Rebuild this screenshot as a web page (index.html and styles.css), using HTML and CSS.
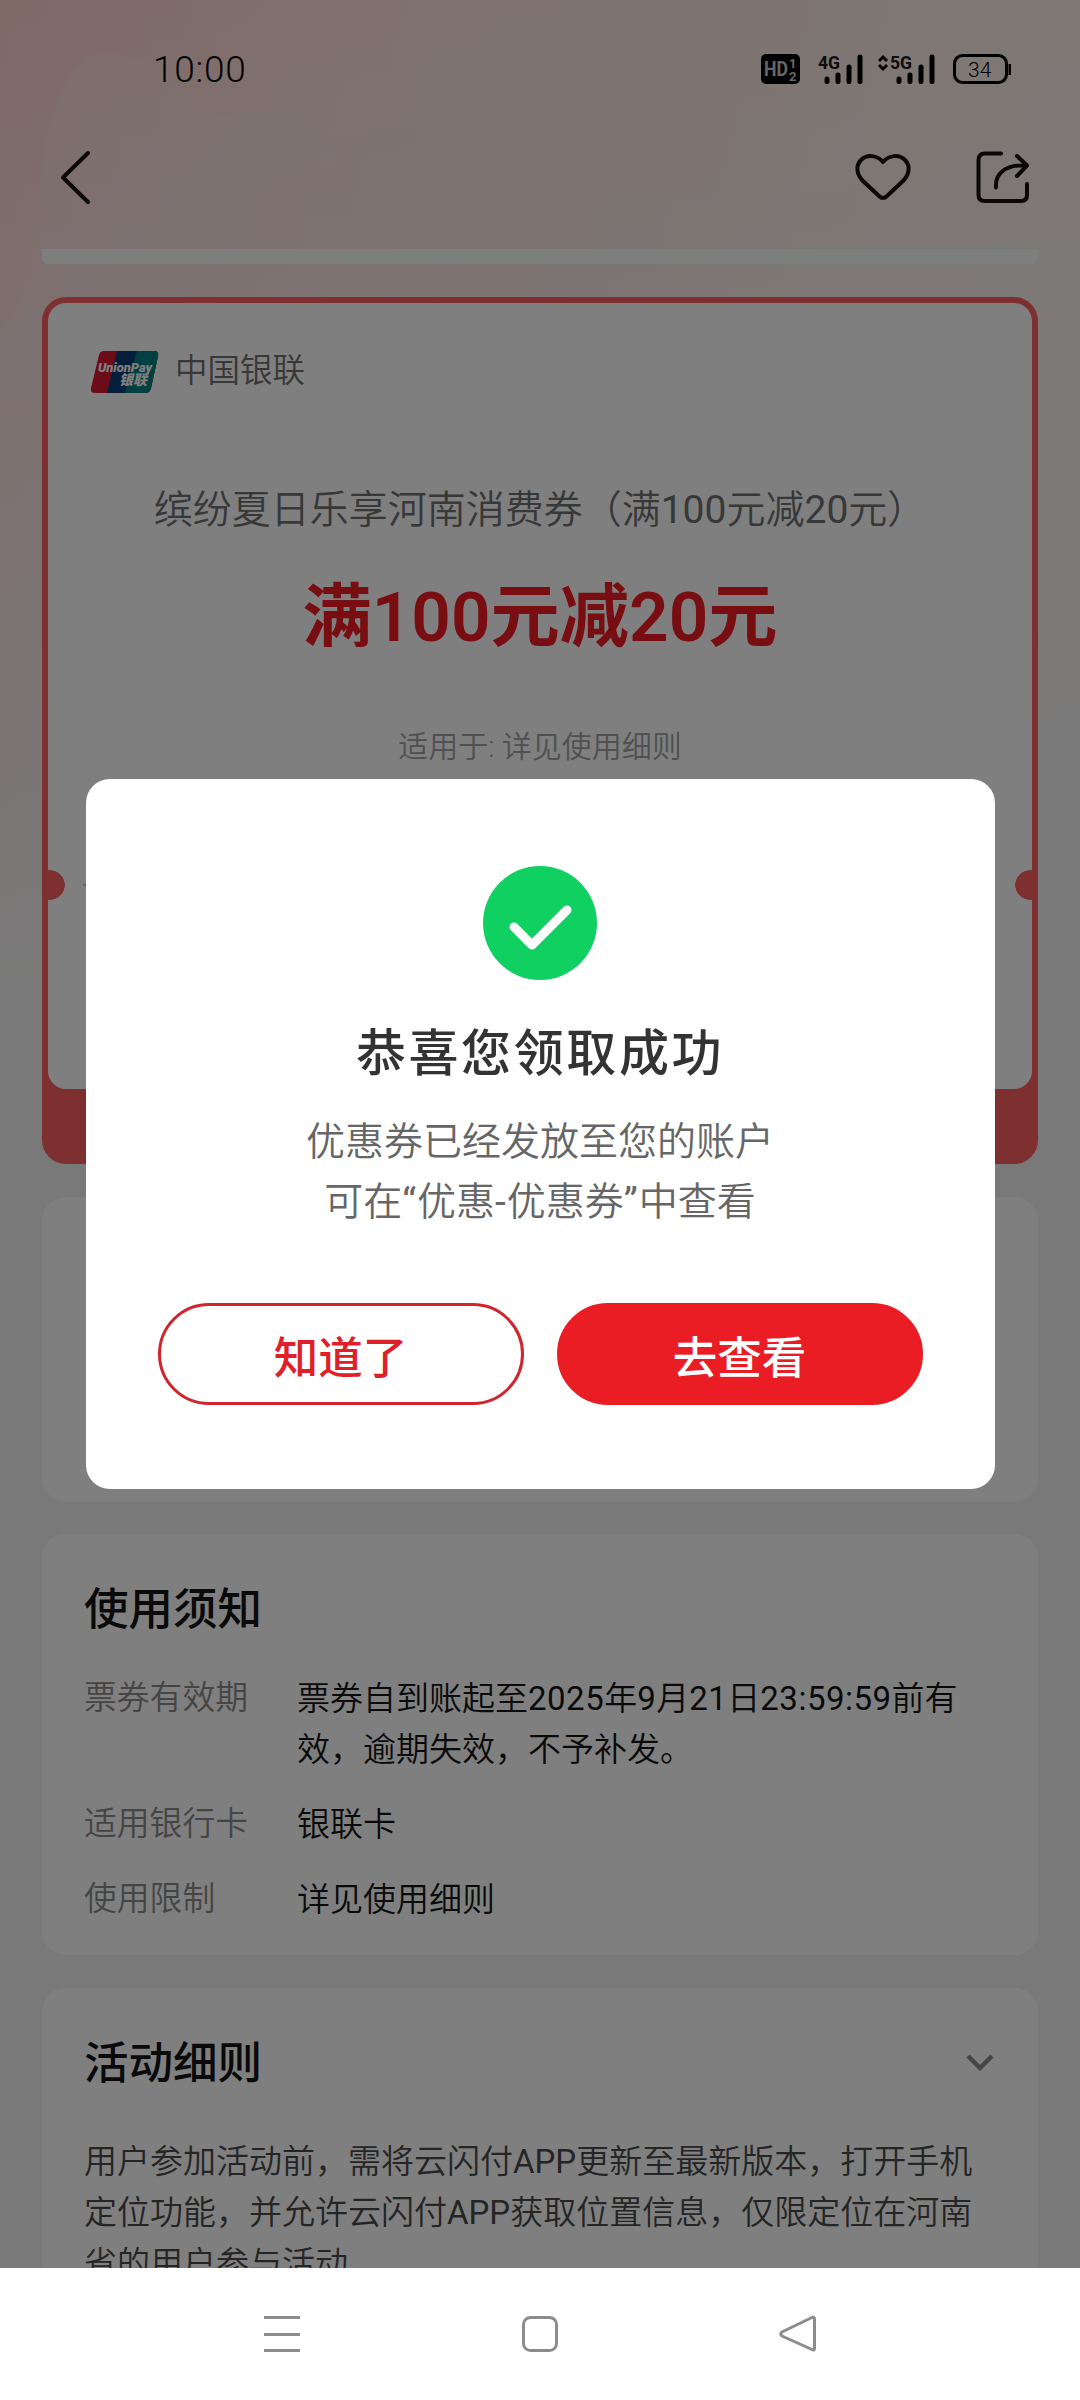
FILE: index.html
```html
<!DOCTYPE html>
<html lang="zh-CN">
<head>
<meta charset="utf-8">
<title>优惠券详情</title>
<link rel="stylesheet" href="styles.css">
</head>
<body>
<div class="screen">
  <main class="page">
    <svg class="backdrop" width="400" height="400" viewBox="0 0 400 400" aria-hidden="true">
      <path d="M0 420V330Q38 300 44 150Q60 60 105 52Q145 56 187 90Q185 116 235 118Q262 110 280 113Q340 130 338 165Q270 160 255 200L240 260Z" fill="#f4f4fa" opacity=".14"/>
    </svg>
    <header class="status">
      <span class="clock">10:00</span>
      <svg class="status-icons" width="260" height="36" viewBox="0 0 260 36">
        <rect x="6" y="3" width="39" height="30" rx="5" fill="#000"/>
        <text class="hd" x="9" y="25" textLength="24" lengthAdjust="spacingAndGlyphs">HD</text>
        <text class="hd-mini" x="34" y="17">1</text>
        <text class="hd-mini" x="34" y="30">2</text>
        <text class="net" x="63" y="18" textLength="22" lengthAdjust="spacingAndGlyphs">4G</text>
        <path d="M72 28V30.500M83 24V30.500M94 16V30.500M105 6V30.500" class="bars"/>
        <path d="M124 10L128 6L132 10M124 14L128 18L132 14" class="updown"/>
        <text class="net" x="135" y="18" textLength="22" lengthAdjust="spacingAndGlyphs">5G</text>
        <path d="M144 28V30.500M155 24V30.500M166 16V30.500M177 6V30.500" class="bars"/>
        <rect x="199.500" y="4.500" width="52" height="27" rx="8" class="battery"/>
        <rect x="253.500" y="13" width="2.500" height="11" fill="#000"/>
        <text class="level" x="213" y="25.500">34</text>
      </svg>
    </header>
    <nav class="bar">
      <svg width="36" height="60" viewBox="0 0 36 60" class="line"><path d="M31 6L6 30.500L31 55"/></svg>
      <div class="actions">
        <svg width="60" height="60" viewBox="0 0 60 60" class="line"><path d="M30 15C24 8 14 7 8 13C2 19 4 28 10 34L26 49Q30 53 34 49L50 34C56 28 58 19 52 13C46 7 36 8 30 15Z"/></svg>
        <svg width="60" height="60" viewBox="0 0 60 60" class="line"><path d="M28 6.500H12Q5.500 6.500 5.500 13V48Q5.500 54 12 54H48Q54 54 54 48V37M23 40.500C22 27 32 17.500 52 18.500M44 9L54 18.500L44 29"/></svg>
      </div>
    </nav>
    <div class="strip"></div>

    <section class="coupon">
      <div class="ticket">
        <div class="brand">
          <svg width="68" height="42" viewBox="0 0 68 42">
            <clipPath id="chip"><path d="M13 0H63Q68 0 67 5L60 37Q59 42 54 42H4Q-1 42 0 37L8 4Q9 0 13 0Z"/></clipPath>
            <g clip-path="url(#chip)">
              <rect width="68" height="42" fill="#d81830"/>
              <path d="M26 0H68V42H16Z" fill="#083c78"/>
              <path d="M46 0H68V42H34Z" fill="#008080"/>
            </g>
            <text class="up" x="7" y="21" textLength="54">UnionPay</text>
            <text class="yl" x="28" y="34">银联</text>
          </svg>
          <span>中国银联</span>
        </div>
        <p class="name">缤纷夏日乐享河南消费券（满<b>100</b>元减<b>20</b>元）</p>
        <p class="value">满100元减20元</p>
        <p class="scope">适用于: 详见使用细则</p>
        <div class="tear"></div>
      </div>
    </section>

    <section class="card merchants"></section>

    <section class="card notice">
      <h2>使用须知</h2>
      <dl>
        <dt>票券有效期</dt><dd>票券自到账起至<b>2025</b>年<b>9</b>月<b>21</b>日<b>23:59:59</b>前有效，逾期失效，不予补发。</dd>
        <dt>适用银行卡</dt><dd>银联卡</dd>
        <dt>使用限制</dt><dd>详见使用细则</dd>
      </dl>
    </section>

    <section class="card rules">
      <div class="rules-head">
        <h2>活动细则</h2>
        <svg width="30" height="20" viewBox="0 0 30 20"><path d="M3 2L15 14L27 2" fill="none" stroke="#8c8c8c" stroke-width="4.500"/></svg>
      </div>
      <p>用户参加活动前，需将云闪付<b>APP</b>更新至最新版本，打开手机定位功能，并允许云闪付<b>APP</b>获取位置信息，仅限定位在河南省的用户参与活动</p>
    </section>
  </main>

  <div class="mask">
    <div class="modal" role="dialog">
      <svg width="114" height="114" viewBox="0 0 114 114"><circle cx="57" cy="57" r="57" fill="#0fd061"/><path d="M31 61L49 79L84 44" fill="none" stroke="#fff" stroke-width="9" stroke-linecap="round" stroke-linejoin="round"/></svg>
      <h1>恭喜您领取成功</h1>
      <p>优惠券已经发放至您的账户<br>可在<b>“</b>优惠<b>-</b>优惠券<b>”</b>中查看</p>
      <div class="buttons">
        <button class="btn">知道了</button>
        <button class="btn primary">去查看</button>
      </div>
    </div>
  </div>

  <footer class="sysnav">
    <svg width="40" height="40" viewBox="0 0 40 40"><path d="M2 3.500H38M2 20.500H38M2 36.500H38"/></svg>
    <svg width="40" height="40" viewBox="0 0 40 40"><rect x="3.500" y="3.500" width="33" height="33" rx="7"/></svg>
    <svg width="40" height="40" viewBox="0 0 40 40"><path d="M34 3.500Q36.500 2.500 36.500 5V34Q36.500 37 34 35.500L4 22Q1.500 20 4 18Z"/></svg>
  </footer>
</div>
</body>
</html>
```

FILE: styles.css
```css
* { box-sizing: border-box; margin: 0; padding: 0; }

body {
  width: 1080px;
  font-family: Roboto, "Noto Sans CJK SC", sans-serif;
  font-weight: 350;
  color: #141414;
}

/* Latin runs sit one step heavier than the Chinese text around them */
p b, dd b { font-weight: 400; }
dd b { letter-spacing: .5px; }

.screen {
  position: relative;
  display: flex;
  flex-direction: column;
  width: 1080px;
  height: 2400px;
  overflow: hidden;
}

.page {
  position: relative;
  height: 2268px;
  overflow: hidden;
  background:
    linear-gradient(170deg, rgba(243, 243, 243, 0) 0, rgba(243, 243, 243, .25) 300px, #f3f3f3 1000px),
    linear-gradient(105deg, #ffd4d1 0, #ffe0db 350px, #fff0e8 1000px, #fbf3ec 1400px);
}

.backdrop { position: absolute; left: 0; top: 0; }

.status {
  position: relative;
  display: flex;
  justify-content: space-between;
  align-items: center;
  height: 138px;
  padding: 0 65px 0 153px;
}
.clock { font-size: 37px; font-weight: 350; letter-spacing: .7px; color: #000; }
.hd { font-size: 20px; font-weight: 700; fill: #ccc; }
.hd-mini { font-size: 13px; font-weight: 700; fill: #ccc; }
.net { font-size: 19px; font-weight: 700; fill: #201818; }
.level { font-size: 21px; font-weight: 350; fill: #000; }
.bars { stroke: #000; stroke-width: 5; stroke-linecap: round; }
.updown { fill: none; stroke: #000; stroke-width: 3; }
.battery { fill: none; stroke: #000; stroke-width: 3; }

.bar {
  position: relative;
  display: flex;
  justify-content: space-between;
  align-items: center;
  height: 78px;
  padding: 0 47px 0 57px;
}
.actions { display: flex; gap: 60px; }
.line { fill: none; stroke: #141010; stroke-width: 4; stroke-linecap: round; stroke-linejoin: round; }

.strip {
  position: relative;
  height: 15px;
  margin: 33px 42px 0;
  border-radius: 0 0 6px 6px;
  background: #fbfffe;
}

.coupon {
  position: relative;
  height: 867px;
  margin: 33px 42px 0;
  padding: 6px;
  border-radius: 24px;
  background: #fc6060;
}
.ticket {
  position: relative;
  height: 786px;
  padding-top: 45px;
  border-radius: 18px;
  background: #fff;
  text-align: center;
  overflow: hidden;
}
.brand {
  display: flex;
  align-items: center;
  gap: 17px;
  height: 48px;
  padding-left: 43px;
  font-size: 32.500px;
  line-height: 48px;
  color: #707070;
}
.brand span { margin: -3px 0 0 -1px; }
.up { font-size: 13px; font-weight: 900; font-style: italic; fill: #fff; }
.yl { font-size: 14px; font-weight: 900; font-style: italic; fill: #fff; }
.name { margin-top: 84px; font-size: 39px; line-height: 60px; color: #707070; }
.value { margin-top: 33px; font-size: 69.300px; line-height: 90px; font-weight: 600; color: #f01c22; }
.scope { margin-top: 64px; font-size: 30px; line-height: 40px; color: #a0a0a0; }
.tear {
  height: 30px;
  margin-top: 103px;
  background:
    radial-gradient(circle 15px at 2px 15px, #fc6060 14.500px, transparent 15px),
    radial-gradient(circle 15px at 982px 15px, #fc6060 14.500px, transparent 15px),
    linear-gradient(#ccc, #ccc) 35px 14px / 900px 2px no-repeat;
}

.card {
  position: relative;
  margin: 33px 42px 0;
  padding: 0 43px 0 42px;
  border-radius: 24px;
  background: #fff;
}
.card h2 { font-size: 44.500px; line-height: 60px; font-weight: 500; }
.merchants { height: 305px; }
.notice { height: 421px; margin-top: 32px; padding-top: 46px; }
.notice dl {
  display: grid;
  grid-template-columns: 213px 1fr;
  row-gap: 24px;
  margin-top: 33px;
  padding-right: 10px;
  font-size: 33px;
  line-height: 51px;
}
.notice dt { font-size: 32.800px; color: #8a8a8a; }
.notice dd { color: #141414; }
.rules { height: 400px; padding-top: 46px; }
.rules-head { display: flex; justify-content: space-between; align-items: center; }
.rules p { margin-top: 42px; margin-right: -8px; font-size: 33px; line-height: 51px; color: #4a4a4a; }

.mask {
  position: absolute;
  inset: 0 0 132px;
  display: flex;
  justify-content: center;
  align-items: center;
  background: rgba(0, 0, 0, .5);
}
.modal {
  display: flex;
  flex-direction: column;
  align-items: center;
  width: 909px;
  height: 710px;
  padding-top: 87px;
  border-radius: 24px;
  background: #fff;
}
.modal h1 { margin-top: 39px; font-size: 50px; line-height: 70px; letter-spacing: 2.600px; font-weight: 500; color: #333; }
.modal p { margin-top: 23px; font-size: 39px; line-height: 60px; color: #666; text-align: center; }
.modal b { letter-spacing: 1px; }
.buttons { display: flex; gap: 33px; margin-top: 71px; }
.btn {
  width: 366px;
  height: 102px;
  border: 3px solid #d0252c;
  border-radius: 51px;
  background: #fff;
  font-family: inherit;
  font-size: 44.500px;
  font-weight: 500;
  color: #e02028;
}
.primary { border-color: #ea1d24; background: #ea1d24; color: #fff; }

.sysnav {
  display: flex;
  justify-content: center;
  gap: 218px;
  height: 132px;
  padding-top: 46px;
  background: #fff;
}
.sysnav svg { fill: none; stroke: #8c8c8c; stroke-width: 3; }
```
